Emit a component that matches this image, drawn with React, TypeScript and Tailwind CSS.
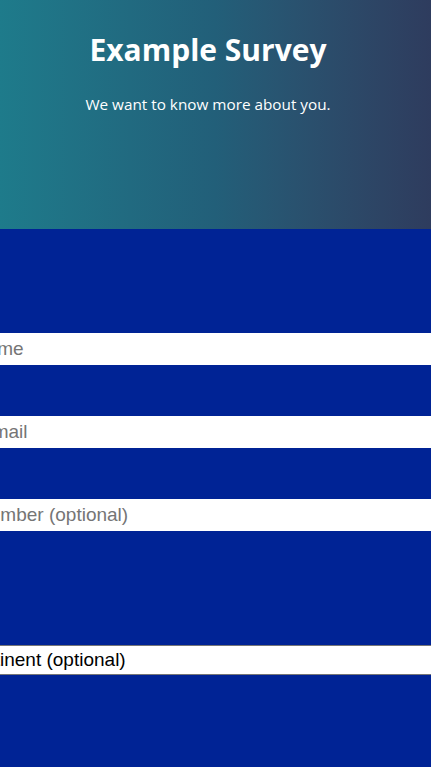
import React from "react";

export default function App() {
  return (
    <div className="min-h-[767px] overflow-hidden bg-[#002395]">
      {/* header */}
      <header className="h-[229px] bg-gradient-to-r from-[#1e7b8b] via-[#225f79] to-[#2e3c5e] pr-[15px] pt-[30px] text-center text-white [font-family:'Open_Sans',sans-serif]">
        <h1 className="text-[30px] font-bold leading-[40px]">Example Survey</h1>
        <p className="mt-[24px] text-[15.3px] leading-[20px]">We want to know more about you.</p>
      </header>

      <form className="pt-[104px] [font-family:'Liberation_Sans',Arial,sans-serif]">
        <input
          type="text"
          placeholder="Name"
          className="-ml-[29px] block h-[32px] w-[calc(100%+29px)] bg-white px-[2px] text-[19px] text-black outline-none placeholder:text-[#757575]"
        />
        <input
          type="email"
          placeholder="Email"
          className="-ml-[22px] mt-[51px] block h-[32px] w-[calc(100%+22px)] bg-white px-[2px] text-[19px] text-black outline-none placeholder:text-[#757575]"
        />
        <input
          type="tel"
          placeholder="Phone number (optional)"
          className="-ml-[83px] mt-[51px] block h-[32px] w-[calc(100%+83px)] bg-white px-[2px] text-[19px] text-black outline-none placeholder:text-[#757575]"
        />
        <select
          defaultValue=""
          className="-ml-[96px] mt-[114px] block h-[30px] w-[calc(100%+96px)] appearance-none border-y border-[#767676] bg-white px-[2px] text-[19px] text-black outline-none"
        >
          <option value="">Select continent (optional)</option>
          <option>Africa</option>
          <option>Asia</option>
          <option>Europe</option>
          <option>North America</option>
          <option>South America</option>
          <option>Oceania</option>
        </select>
      </form>
    </div>
  );
}
